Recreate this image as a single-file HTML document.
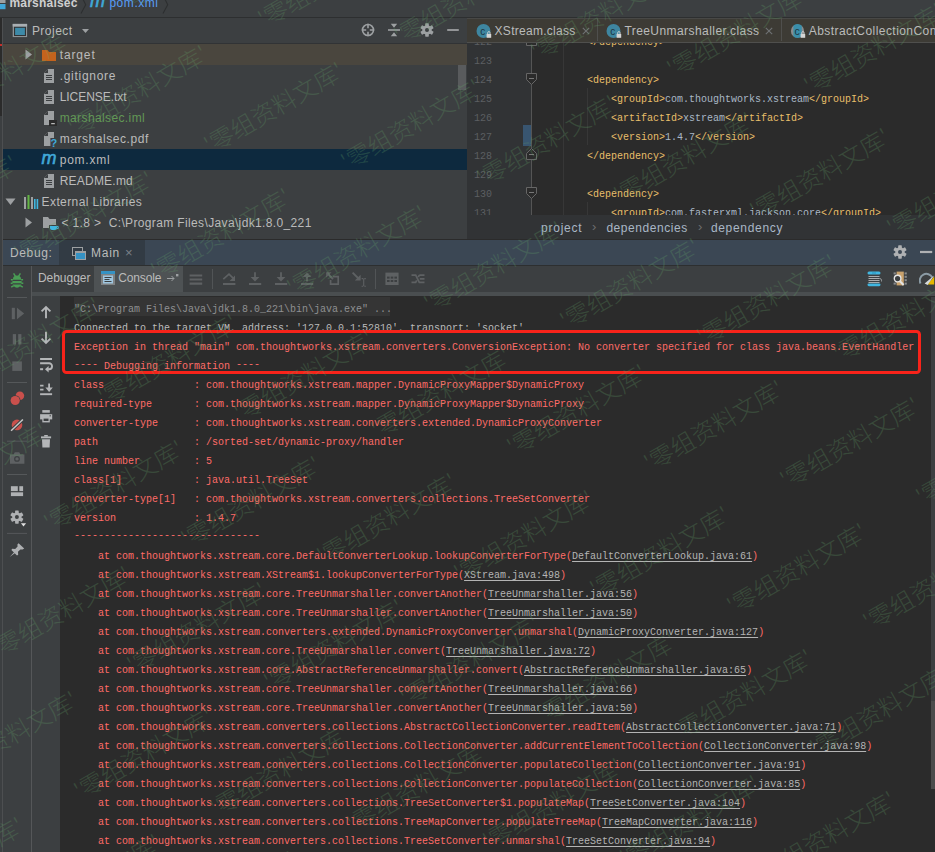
<!DOCTYPE html>
<html><head><meta charset="utf-8">
<style>
*{margin:0;padding:0;box-sizing:border-box}
html,body{width:935px;height:852px;overflow:hidden;background:#3c3f41}
body{position:relative;font-family:"Liberation Sans","Noto Sans CJK SC",sans-serif;font-size:12px;color:#bbbbbb}
.abs{position:absolute}
.ui{position:absolute;font-family:"Liberation Sans","Noto Sans CJK SC",sans-serif;font-size:12px;color:#bbb;white-space:pre;line-height:16px}
.mono{font-family:"Liberation Mono","Noto Sans CJK SC",monospace;font-size:11px;white-space:pre;transform:scaleX(0.90909);transform-origin:0 0}
#nav{left:0;top:0;width:935px;height:17px;background:#3c3f41;overflow:hidden}
#navline{left:0;top:17px;width:935px;height:1px;background:#2d2f30}
#lstrip{left:0;top:18px;width:3px;height:834px;background:#3c3f41;border-right:1px solid #4d4f51}
#proj{left:3px;top:18px;width:464px;height:221px;background:#3c3f41;overflow:hidden}
#projhead{left:0;top:0;width:464px;height:26px;background:#3c3f41;border-bottom:1px solid #313335}
.row{position:absolute;left:0;width:464px;height:21px}
.row.ex{background:#4a463e}
.row.sel{background:#0d293e}
.row .t{position:absolute;top:3px;font-size:12px;line-height:16px;color:#bbb;white-space:pre}
#editor{left:467px;top:18px;width:468px;height:221px;background:#2b2b2b;overflow:hidden}
#tabs{left:0;top:0;width:468px;height:25px;background:#3d3b35;border-bottom:1px solid #4f4f4d}
#gutter{left:0;top:25px;width:64px;height:172px;background:#313335}
#crumbs{left:0;top:197px;width:468px;height:24px;background:#313335}
.ln{position:absolute;left:7px;height:19px;line-height:19px;color:#5c5f62}
.code{position:absolute;height:19px;line-height:19px}
.code .t{color:#e8bf6a}
.code .x{color:#a9b7c6}
#dbghead{left:0;top:239px;width:935px;height:26px;background:#3b4754;border-top:1px solid #2b2b2b}
#dbgbar{left:3px;top:265px;width:932px;height:31px;background:#3c3f41;border-top:1px solid #2d2f30}
#lcol{left:3px;top:266px;width:29px;height:586px;background:#3c3f41;border-right:1px solid #555759}
#acol{left:32px;top:296px;width:28px;height:556px;background:#3c3f41}
#console{left:60px;top:296px;width:875px;height:556px;background:#2b2b2b;overflow:hidden}
.cl{position:absolute;left:14px;height:19px;line-height:19px;color:#ff6b68}
.dsh{position:relative;top:-2px}
.cl.g0{color:#8f9092}
.cl.g1{color:#bbbbbb}
.cl u{color:#b4b4b4;text-decoration:underline;text-underline-offset:2px}
#hl0{left:14px;top:1px;width:316px;height:19px;background:#353535}
#redbox{left:62px;top:330px;width:859px;height:44px;border:3px solid #f8231a;border-radius:4.5px}
.wm{position:absolute;font-family:"Noto Sans CJK SC","Liberation Sans",sans-serif;font-weight:300;font-size:24px;line-height:24px;color:rgb(100,165,105);opacity:.25;transform:rotate(-30deg);transform-origin:18px 13.3px;white-space:pre}
#wmlayer{left:0;top:0;width:935px;height:852px;overflow:hidden;pointer-events:none}
</style></head><body>
<!-- top navigation bar -->
<div class="abs" id="nav">
 <svg class="abs" style="left:0;top:0" width="7" height="10" viewBox="0 0 7 10"><rect x="0" y="0" width="5.5" height="3" fill="#9da0a2"/><rect x="0" y="4" width="5.5" height="5.2" fill="#40a6d8"/></svg>
 <span class="ui" style="left:9.4px;top:-5px;letter-spacing:0.217px;font-weight:bold;color:#cfcfcf">marshalsec</span>
 <svg class="abs" style="left:78px;top:-4px" width="10" height="18" viewBox="0 0 10 18"><path d="M3.5 0L7.7 8.8L3 17.5" stroke="#2d2f30" fill="none" stroke-width="1.1"/></svg>
 <span class="abs" style="left:90px;top:-9.5px;font:italic normal 18px/20px 'Liberation Sans',sans-serif;color:#40a8d8;-webkit-text-stroke:0.6px #40a8d8">m</span>
 <span class="ui" style="left:109.4px;top:-5px;letter-spacing:0.551px;color:#589df6">pom.xml</span>
 <svg class="abs" style="left:160px;top:-4px" width="10" height="18" viewBox="0 0 10 18"><path d="M3.5 0L7.7 8.8L3 17.5" stroke="#2d2f30" fill="none" stroke-width="1.1"/></svg>
</div>
<div class="abs" id="navline"></div>

<!-- project tool window -->
<div class="abs" id="proj">
 <div class="abs" id="projhead">
  <svg class="abs" style="left:9px;top:5px" width="16" height="15" viewBox="0 0 16 15"><rect x="0.7" y="0.9" width="14.4" height="13.2" fill="#8d9396"/><rect x="0.7" y="0.9" width="14.4" height="2.6" fill="#a9afb3"/><rect x="2" y="3.8" width="12" height="9.2" fill="#303335"/><rect x="3.1" y="4.8" width="9.8" height="7.2" fill="#3d8aa8"/></svg>
  <span class="ui" style="left:28.9px;top:5px;letter-spacing:0.479px;">Project</span>
  <svg class="abs" style="left:79px;top:11px" width="8" height="5" viewBox="0 0 8 5"><path d="M0 0h7L3.5 4z" fill="#9da0a2"/></svg>
  <!-- header icons -->
  <svg class="abs" style="left:357px;top:4px" width="16" height="16" viewBox="0 0 16 16"><circle cx="8" cy="8" r="5.5" fill="none" stroke="#9da0a2" stroke-width="1.6"/><path d="M8 1.8v4.4M8 9.8v4.4M1.8 8h4.4M9.8 8h4.4" stroke="#9da0a2" stroke-width="1.6"/></svg>
  <svg class="abs" style="left:383px;top:4px" width="16" height="16" viewBox="0 0 16 16"><path d="M2 8h12" stroke="#9da0a2" stroke-width="1.6"/><path d="M4.8 1.8h6.4L8 5.8zM4.8 14.2h6.4L8 10.2z" fill="#9da0a2"/></svg>
  <svg class="abs" style="left:416px;top:4px" width="16" height="16" viewBox="0 0 16 16"><g fill="#9da0a2"><circle cx="8" cy="8" r="4.7"/><rect x="6.2" y="1.3" width="3.6" height="13.4" rx="0.6"/><rect x="6.2" y="1.3" width="3.6" height="13.4" rx="0.6" transform="rotate(60 8 8)"/><rect x="6.2" y="1.3" width="3.6" height="13.4" rx="0.6" transform="rotate(120 8 8)"/></g><circle cx="8" cy="8" r="2" fill="#3c3f41"/></svg>
  <svg class="abs" style="left:442px;top:4px" width="16" height="16" viewBox="0 0 16 16"><path d="M2.2 8h11.6" stroke="#9da0a2" stroke-width="1.8"/></svg>
 </div>
<div class="row ex" style="top:26px"><svg class="abs" style="left:22px;top:5px" width="8" height="11" viewBox="0 0 8 11"><path d="M0.5 0.5L7 5.5L0.5 10.5z" fill="#9da0a2"/></svg><svg class="abs" style="left:37.5px;top:3px" width="16" height="16" viewBox="0 0 16 16"><path d="M1 3h5.5l1.5 2H15v9H1z" fill="#c4631d"/></svg><span class="t" style="left:56.7px;letter-spacing:0.871px;color:#bbb">target</span></div>
<div class="row " style="top:47px"><svg class="abs" style="left:38px;top:3px" width="16" height="16" viewBox="0 0 16 16"><path d="M7 1h6v14H3V5z" fill="#9da0a2"/><path d="M3 5l4-4v4z" fill="#3c3f41"/><path d="M3.6 4.4L6.4 1.6" stroke="#9da0a2" stroke-width="0"/><path d="M5 7.5h6M5 9.5h6M5 11.5h6" stroke="#3c3f41" stroke-width="1"/></svg><span class="t" style="left:56.7px;letter-spacing:0.704px;color:#bbb">.gitignore</span></div>
<div class="row " style="top:68px"><svg class="abs" style="left:38px;top:3px" width="16" height="16" viewBox="0 0 16 16"><path d="M7 1h6v14H3V5z" fill="#9da0a2"/><path d="M3 5l4-4v4z" fill="#3c3f41"/><path d="M3.6 4.4L6.4 1.6" stroke="#9da0a2" stroke-width="0"/><path d="M5 7.5h6M5 9.5h6M5 11.5h6" stroke="#3c3f41" stroke-width="1"/></svg><span class="t" style="left:56.7px;letter-spacing:-0.039px;color:#bbb">LICENSE.txt</span></div>
<div class="row " style="top:89px"><svg class="abs" style="left:38px;top:3px" width="16" height="16" viewBox="0 0 16 16"><path d="M7 1h6v14H3V5z" fill="#9da0a2"/><path d="M3 5l4-4v4z" fill="#3c3f41"/><rect x="8" y="10" width="8" height="6" fill="#2b2b2b"/><rect x="10.2" y="13.2" width="3.6" height="1" fill="#ddd"/></svg><span class="t" style="left:56.7px;letter-spacing:0.383px;color:#629755">marshalsec.iml</span></div>
<div class="row " style="top:110px"><svg class="abs" style="left:38px;top:3px" width="16" height="16" viewBox="0 0 16 16"><path d="M7 1h6v6h-3.6v8H3V5z" fill="#9da0a2"/><path d="M3 5l4-4v4z" fill="#3c3f41"/><text x="9.6" y="15.6" font-family="Liberation Sans,sans-serif" font-weight="bold" font-size="11" fill="#3fa9d9">?</text></svg><span class="t" style="left:56.7px;letter-spacing:0.553px;color:#bbb">marshalsec.pdf</span></div>
<div class="row sel" style="top:131px"><span class="abs" style="left:38.5px;top:-1px;font:italic normal 18px 'Liberation Sans',sans-serif;color:#40a8d8;-webkit-text-stroke:0.6px #40a8d8">m</span><span class="t" style="left:56.7px;letter-spacing:0.765px;color:#bbb">pom.xml</span></div>
<div class="row " style="top:152px"><svg class="abs" style="left:38px;top:3px" width="16" height="16" viewBox="0 0 16 16"><path d="M7 1h6v14H3V5z" fill="#9da0a2"/><path d="M3 5l4-4v4z" fill="#3c3f41"/><path d="M3.6 4.4L6.4 1.6" stroke="#9da0a2" stroke-width="0"/><path d="M5 7.5h6M5 9.5h6M5 11.5h6" stroke="#3c3f41" stroke-width="1"/></svg><span class="t" style="left:56.7px;letter-spacing:0.217px;color:#bbb">README.md</span></div>
<div class="row " style="top:173px"><svg class="abs" style="left:2px;top:7px" width="11" height="8" viewBox="0 0 11 8"><path d="M0.5 0.5h10L5.5 7z" fill="#9da0a2"/></svg><svg class="abs" style="left:20px;top:3px" width="16" height="16" viewBox="0 0 16 16"><rect x="1" y="3" width="2" height="12" fill="#9da0a2"/><rect x="4.5" y="1" width="2" height="14" fill="#62b543"/><rect x="8" y="3" width="2" height="12" fill="#9da0a2"/><rect x="11" y="5" width="1.6" height="10" fill="#40b6e0"/><rect x="13.6" y="5" width="1.6" height="10" fill="#40b6e0"/></svg><span class="t" style="left:38.6px;letter-spacing:0.396px;color:#bbb">External Libraries</span></div>
<div class="row " style="top:194px"><svg class="abs" style="left:22px;top:5px" width="8" height="11" viewBox="0 0 8 11"><path d="M0.5 0.5L7 5.5L0.5 10.5z" fill="#9da0a2"/></svg><svg class="abs" style="left:39px;top:3px" width="18" height="16" viewBox="0 0 18 16"><path d="M1 2h5l1.5 2H14v6H7v3H1z" fill="#9da0a2"/><path d="M8 11h7v2.2a2 2 0 0 1-2 1.8h-3a2 2 0 0 1-2-1.8z" fill="#40b6e0"/><path d="M15 11.5h1.2v2H15" stroke="#40b6e0" fill="none"/></svg><span class="t" style="left:58.4px;letter-spacing:0.360px;color:#bbb">&lt; 1.8 &gt;  C:\Program Files\Java\jdk1.8.0_221</span></div>
 <div class="abs" style="left:455px;top:47px;width:8px;height:25px;background:#595b5d"></div>
</div>

<!-- editor -->
<div class="abs" id="editor">
 <div class="abs" id="gutter"></div>
 <div class="abs" style="left:64px;top:25px;width:1px;height:172px;background:#555"></div>
 <div class="abs" style="left:96px;top:25px;width:1px;height:172px;background:#373737"></div>
 <div class="abs" style="left:120px;top:70px;width:1px;height:57px;background:#373737"></div>
 <div class="abs" style="left:120px;top:184px;width:1px;height:14px;background:#373737"></div>
 <div class="abs" style="left:56px;top:107px;width:8px;height:21px;background:#385570"></div>
<div class="ln mono" style="top:14.5px">122</div>
<div class="code mono" style="top:14.5px;left:120px"><span class="t">&lt;/dependency&gt;</span></div>
<div class="ln mono" style="top:33.5px">123</div>
<div class="ln mono" style="top:52.5px">124</div>
<div class="code mono" style="top:52.5px;left:120px"><span class="t">&lt;dependency&gt;</span></div>
<div class="ln mono" style="top:71.5px">125</div>
<div class="code mono" style="top:71.5px;left:144px"><span class="t">&lt;groupId&gt;</span><span class="x">com.thoughtworks.xstream</span><span class="t">&lt;/groupId&gt;</span></div>
<div class="ln mono" style="top:90.5px">126</div>
<div class="code mono" style="top:90.5px;left:144px"><span class="t">&lt;artifactId&gt;</span><span class="x">xstream</span><span class="t">&lt;/artifactId&gt;</span></div>
<div class="ln mono" style="top:109.5px">127</div>
<div class="code mono" style="top:109.5px;left:144px"><span class="t">&lt;version&gt;</span><span class="x">1.4.7</span><span class="t">&lt;/version&gt;</span></div>
<div class="ln mono" style="top:128.5px">128</div>
<div class="code mono" style="top:128.5px;left:120px"><span class="t">&lt;/dependency&gt;</span></div>
<div class="ln mono" style="top:147.5px">129</div>
<div class="ln mono" style="top:166.5px">130</div>
<div class="code mono" style="top:166.5px;left:120px"><span class="t">&lt;dependency&gt;</span></div>
<div class="ln mono" style="top:185.5px">131</div>
<div class="code mono" style="top:185.5px;left:144px"><span class="t">&lt;groupId&gt;</span><span class="x">com.fasterxml.jackson.core</span><span class="t">&lt;/groupId&gt;</span></div>
 <!-- fold markers -->
 <svg class="abs" style="left:59px;top:16px" width="11" height="12" viewBox="0 0 11 12"><path d="M0.5 11.5h10v-6l-5-5l-5 5z" fill="#2b2b2b" stroke="#666"/><path d="M3 6.5h5" stroke="#777"/></svg>
 <svg class="abs" style="left:59px;top:55px" width="11" height="12" viewBox="0 0 11 12"><path d="M0.5 0.5h10v6l-5 5l-5-5z" fill="#2b2b2b" stroke="#666"/><path d="M3 5.5h5" stroke="#777"/></svg>
 <svg class="abs" style="left:59px;top:130px" width="11" height="12" viewBox="0 0 11 12"><path d="M0.5 11.5h10v-6l-5-5l-5 5z" fill="#2b2b2b" stroke="#666"/><path d="M3 6.5h5" stroke="#777"/></svg>
 <svg class="abs" style="left:59px;top:169px" width="11" height="12" viewBox="0 0 11 12"><path d="M0.5 0.5h10v6l-5 5l-5-5z" fill="#2b2b2b" stroke="#666"/><path d="M3 5.5h5" stroke="#777"/></svg>
 <div class="abs" id="tabs">
  <div class="abs" style="left:0;top:0;width:468px;height:1px;background:#484846"></div>
  <div class="abs" style="left:130px;top:0;width:1px;height:23px;background:#4f4f4d"></div>
  <div class="abs" style="left:314px;top:0;width:1px;height:23px;background:#4f4f4d"></div>
  <svg class="abs" style="left:9px;top:5px" width="17" height="16" viewBox="0 0 17 16"><circle cx="7.5" cy="8" r="7" fill="#3e86a0"/><text x="4.2" y="11.6" font-family="Liberation Sans,sans-serif" font-size="10" fill="#1d3540">c</text><rect x="10.6" y="11" width="4.6" height="3.8" fill="#d4d4d4"/><path d="M11.7 11v-1.2a1.2 1.2 0 0 1 2.4 0V11" stroke="#d4d4d4" fill="none" stroke-width="0.9"/></svg>
  <span class="ui" style="left:27.6px;top:5px;letter-spacing:0.266px;">XStream.class</span>
  <svg class="abs" style="left:115px;top:9px" width="8" height="8" viewBox="0 0 8 8"><path d="M0.8 0.8L7.2 7.2M7.2 0.8L0.8 7.2" stroke="#6f7274" stroke-width="1.1"/></svg>
  <svg class="abs" style="left:139px;top:5px" width="17" height="16" viewBox="0 0 17 16"><circle cx="7.5" cy="8" r="7" fill="#3e86a0"/><text x="4.2" y="11.6" font-family="Liberation Sans,sans-serif" font-size="10" fill="#1d3540">c</text><rect x="10.6" y="11" width="4.6" height="3.8" fill="#d4d4d4"/><path d="M11.7 11v-1.2a1.2 1.2 0 0 1 2.4 0V11" stroke="#d4d4d4" fill="none" stroke-width="0.9"/></svg>
  <span class="ui" style="left:157.4px;top:5px;letter-spacing:0.435px;">TreeUnmarshaller.class</span>
  <svg class="abs" style="left:298px;top:9px" width="8" height="8" viewBox="0 0 8 8"><path d="M0.8 0.8L7.2 7.2M7.2 0.8L0.8 7.2" stroke="#6f7274" stroke-width="1.1"/></svg>
  <svg class="abs" style="left:323px;top:5px" width="17" height="16" viewBox="0 0 17 16"><defs><clipPath id="cpa"><rect x="3.4" y="0" width="8.4" height="16"/></clipPath></defs><circle cx="7.5" cy="8" r="6.6" fill="#8a8c8e"/><circle cx="7.5" cy="8" r="7" fill="#3a8eaa" clip-path="url(#cpa)"/><text x="4.4" y="11.6" font-family="Liberation Sans,sans-serif" font-size="10.5" fill="#1d3540">c</text><rect x="10.6" y="11" width="4.6" height="3.8" fill="#d4d4d4"/><path d="M11.7 11v-1.2a1.2 1.2 0 0 1 2.4 0V11" stroke="#d4d4d4" fill="none" stroke-width="0.9"/></svg>
  <span class="ui" style="left:341.7px;top:5px;letter-spacing:0.450px;">AbstractCollectionConverter.class</span>
 </div>
 <div class="abs" id="crumbs">
  <span class="ui" style="left:74.0px;top:5px;letter-spacing:0.769px;color:#a9b7c6">project</span>
  <span class="ui" style="left:125px;top:4px;font-size:13px;color:#6e6e6e">›</span>
  <span class="ui" style="left:139.4px;top:5px;letter-spacing:0.548px;color:#a9b7c6">dependencies</span>
  <span class="ui" style="left:231px;top:4px;font-size:13px;color:#6e6e6e">›</span>
  <span class="ui" style="left:243.9px;top:5px;letter-spacing:0.683px;color:#a9b7c6">dependency</span>
 </div>
</div>

<!-- debug tool window header -->
<div class="abs" id="dbghead">
 <span class="ui" style="left:9.9px;top:5px;letter-spacing:0.669px;">Debug:</span>
 <div class="abs" style="left:59px;top:0;width:86px;height:25px;background:#323b44"></div>
 <svg class="abs" style="left:71px;top:5px" width="16" height="16" viewBox="0 0 16 16"><rect x="1.5" y="2.5" width="10" height="8" fill="none" stroke="#9da0a2"/><rect x="4" y="6" width="11" height="9" fill="#9da0a2"/><rect x="5" y="8" width="9" height="6" fill="#3592c4"/></svg>
 <span class="ui" style="left:91.1px;top:5px;letter-spacing:0.696px;">Main</span>
 <span class="ui" style="left:125px;top:5px;font-size:13px;color:#7a8088">×</span>
 <svg class="abs" style="left:892px;top:4px" width="16" height="16" viewBox="0 0 16 16"><g fill="#afb1b3"><circle cx="8" cy="8" r="4.7"/><rect x="6.2" y="1.3" width="3.6" height="13.4" rx="0.6"/><rect x="6.2" y="1.3" width="3.6" height="13.4" rx="0.6" transform="rotate(60 8 8)"/><rect x="6.2" y="1.3" width="3.6" height="13.4" rx="0.6" transform="rotate(120 8 8)"/></g><circle cx="8" cy="8" r="2" fill="#3b4754"/></svg>
 <svg class="abs" style="left:918px;top:4px" width="17" height="16" viewBox="0 0 17 16"><path d="M2 8h12.2" stroke="#afb1b3" stroke-width="2.2"/></svg>
</div>

<!-- debug toolbar -->
<div class="abs" id="dbgbar">
 <div class="abs" style="left:91px;top:0;width:89px;height:26px;background:#4e5254"></div>
 <div class="abs" style="left:29px;top:26px;width:903px;height:4px;background:#4a4e50"></div>
 <span class="ui" style="left:34.9px;top:4px;letter-spacing:-0.013px;">Debugger</span>
 <svg class="abs" style="left:97px;top:4px" width="16" height="16" viewBox="0 0 16 16"><rect x="1" y="1" width="14" height="14" fill="#7f8284"/><rect x="1" y="1" width="14" height="3" fill="#3592c4"/><rect x="3" y="5.5" width="10" height="8" fill="#9fc6e0"/><path d="M4.5 7.5h7M4.5 9.5h5M4.5 11.5h7" stroke="#3c3f41"/></svg>
 <span class="ui" style="left:115.2px;top:4px;letter-spacing:-0.119px;">Console</span>
 <svg class="abs" style="left:164px;top:7px" width="12" height="10" viewBox="0 0 12 10"><path d="M0 5.5h7M4.5 3L7 5.5L4.5 8" stroke="#9da0a2" fill="none"/><rect x="9" y="1" width="2.4" height="2.4" fill="#9da0a2"/></svg>
 <!-- disabled toolbar icons -->
 <svg class="abs" style="left:185px;top:7px" width="16" height="14" viewBox="0 0 16 14"><path d="M1.6 2.5h12.6M1.6 6.5h12.6M1.6 10.6h12.6" stroke="#5e6163" stroke-width="2.2"/></svg>
 <div class="abs" style="left:209px;top:3px;width:1px;height:20px;background:#515456"></div>
 <svg class="abs" style="left:218px;top:5px" width="16" height="16" viewBox="0 0 16 16"><path d="M2 13h12.4" stroke="#5e6163" stroke-width="2"/><path d="M2.3 8.2L8 3.2L12.6 7.6" stroke="#5e6163" stroke-width="1.7" fill="none"/><path d="M14 4.6V10H8.6z" fill="#5e6163"/></svg>
 <svg class="abs" style="left:244px;top:5px" width="16" height="16" viewBox="0 0 16 16"><path d="M2 13h12.2" stroke="#5e6163" stroke-width="2"/><path d="M8 1.2v6" stroke="#5e6163" stroke-width="1.8"/><path d="M3.6 6h8.8L8 10.6z" fill="#5e6163"/></svg>
 <svg class="abs" style="left:270px;top:5px" width="16" height="16" viewBox="0 0 16 16"><path d="M2 13h12.2" stroke="#5e6163" stroke-width="2"/><path d="M8 1.2v6" stroke="#5e6163" stroke-width="1.8"/><path d="M3.6 6h8.8L8 10.6z" fill="#5e6163"/></svg>
 <svg class="abs" style="left:296px;top:5px" width="16" height="16" viewBox="0 0 16 16"><path d="M2 13h12.2" stroke="#5e6163" stroke-width="2"/><path d="M8 5v5.6" stroke="#5e6163" stroke-width="1.8"/><path d="M3.6 6h8.8L8 1.4z" fill="#5e6163"/></svg>
 <svg class="abs" style="left:322px;top:5px" width="16" height="16" viewBox="0 0 16 16"><path d="M8 5.6h5.2v7.6H5.6V9" fill="none" stroke="#5e6163" stroke-width="1.7"/><path d="M2 2l6 6" stroke="#5e6163" stroke-width="1.9"/><path d="M1.2 1.2h5.4L1.2 6.6z" fill="#5e6163"/></svg>
 <svg class="abs" style="left:348px;top:5px" width="16" height="16" viewBox="0 0 16 16"><path d="M1.6 1.6l6.4 6.4" stroke="#5e6163" stroke-width="1.9"/><path d="M9.6 3.8v5.8H3.8z" fill="#5e6163"/><path d="M10.6 7.6h1.4M13.4 7.6h1.4M10.6 15.2h1.4M13.4 15.2h1.4M12.7 7.6v7.6" stroke="#5e6163" stroke-width="1.1" fill="none"/></svg>
 <div class="abs" style="left:372px;top:3px;width:1px;height:20px;background:#515456"></div>
 <svg class="abs" style="left:381px;top:5px" width="16" height="16" viewBox="0 0 16 16"><rect x="1.4" y="1.6" width="13.2" height="12.4" fill="#5e6163"/><g fill="#3c3f41"><rect x="3" y="5.6" width="2.6" height="2"/><rect x="6.7" y="5.6" width="2.6" height="2"/><rect x="10.4" y="5.6" width="2.6" height="2"/><rect x="3" y="9" width="2.6" height="2"/><rect x="6.7" y="9" width="2.6" height="2"/><rect x="10.4" y="9" width="2.6" height="2"/></g></svg>
 <svg class="abs" style="left:407px;top:5px" width="16" height="16" viewBox="0 0 16 16"><path d="M1.5 4.2h4.2l3.6 7.2h5.2M1.5 11.4h4.2l1-2M9.3 4.2h5.2M8.3 6.2l1-2M9.8 7.8h4.7" stroke="#5e6163" stroke-width="1.7" fill="none"/></svg>
 <!-- right icons -->
 <svg class="abs" style="left:864px;top:5px" width="16" height="16" viewBox="0 0 16 16"><rect x="0.5" y="0.6" width="13" height="3" rx="1.5" fill="#40b6e0"/><path d="M5 2h4" stroke="#2a8bb0" stroke-width="0.8"/><rect x="0.5" y="12.4" width="13" height="2.8" rx="1.4" fill="#40b6e0"/><path d="M1.5 5.5h11M1.5 7.5h11M1.5 9.5h11M1.5 11.5h11" stroke="#c4c7c9" stroke-width="0.8"/><path d="M12.5 7.5q2 0 2 1.6v1.4" stroke="#9da0a2" fill="none" stroke-width="0.9"/></svg>
 <svg class="abs" style="left:889.5px;top:5px" width="16" height="16" viewBox="0 0 16 16"><rect x="3.6" y="0.6" width="7.2" height="13.8" fill="#c9a26d"/><g fill="#8a8d8f"><rect x="0.6" y="1.4" width="2.2" height="2"/><rect x="11.6" y="1.4" width="2.2" height="2"/><rect x="11.6" y="4.8" width="2.2" height="2"/><rect x="11.6" y="8.2" width="2.2" height="2"/><rect x="11.6" y="11.6" width="2.2" height="2"/><rect x="0.6" y="11.6" width="2.2" height="2"/></g><circle cx="4.6" cy="7.6" r="3.3" fill="#3c3f41" stroke="#e4e4e4" stroke-width="1.4"/><path d="M7 10.2l3.6 3.8" stroke="#e4e4e4" stroke-width="2"/></svg>
 <svg class="abs" style="left:915.5px;top:5px" width="17" height="16" viewBox="0 0 17 16"><path d="M1.5 12.5a6.4 6.4 0 0 1 11.8-6" fill="none" stroke="#8b9ba5" stroke-width="2"/><path d="M15.2 5.6v7.8H8.4z" fill="#e5b700"/><path d="M5.6 12.4L15.2 4.4L8.6 14z" fill="#d5dade"/></svg>
</div>

<!-- left debug columns -->
<div class="abs" id="lcol">
 <svg class="abs" style="left:0;top:0" width="28" height="320" viewBox="3 266 28 320">
  <g fill="#499c54"><ellipse cx="17" cy="282" rx="4.7" ry="5.7"/><path d="M13 279.2a4 3.6 0 0 1 8 0z"/></g>
  <path d="M13.6 273.4L15.8 276.8M20.4 273.4L18.2 276.8M10.9 279.8h3M20.1 279.8h3M10.7 283.2h3M20.3 283.2h3M11.2 287.2l2.6-1.6M22.8 287.2l-2.6-1.6" stroke="#499c54" stroke-width="1.5"/>
  <path d="M12.6 280.3h8.8M12.6 283.9h8.8" stroke="#3c3f41" stroke-width="1.3"/>
  <path d="M7 297.5h20M7 382.5h20M7 441.2h20M7 474.5h20M7 533.4h20" stroke="#55585a" stroke-width="1"/>
  <rect x="11.8" y="307.8" width="3.1" height="11.4" fill="#5e6163"/><path d="M17 307.8l7.2 5.7l-7.2 5.7z" fill="#5e6163"/>
  <rect x="12.8" y="334.1" width="3.2" height="10.4" fill="#5e6163"/><rect x="18.2" y="334.1" width="3.2" height="10.4" fill="#5e6163"/>
  <rect x="12.3" y="361.4" width="9.6" height="9.5" fill="#5e6163"/>
  <circle cx="19.9" cy="395.8" r="4.3" fill="#c9504c"/><circle cx="15.2" cy="400.5" r="5.3" fill="#3c3f41"/><circle cx="15.2" cy="400.5" r="4.6" fill="#c9504c"/>
  <circle cx="17" cy="424.9" r="5.3" fill="#c9504c"/><path d="M10.6 431.2L23.4 419" stroke="#3c3f41" stroke-width="3.4"/><path d="M11.1 430.7L22.9 419.5" stroke="#c8c8c8" stroke-width="1.5"/>
  <path d="M10 454.6h3.6l1.2-2.4h4.4l1.2 2.4h4v9.2H10z" fill="#5e6163"/><circle cx="17" cy="458.9" r="2.9" fill="#3c3f41"/><circle cx="17" cy="458.9" r="1.7" fill="#5e6163"/>
  <rect x="10.9" y="486.2" width="6.9" height="4.9" fill="#afb1b3"/><rect x="19.3" y="486.2" width="3.8" height="4.9" fill="#afb1b3"/><rect x="10.9" y="492.3" width="12.2" height="3.8" fill="#afb1b3"/>
  <g fill="#afb1b3"><circle cx="16.9" cy="517.1" r="4.6"/><rect x="15.099999999999998" y="510.5" width="3.6" height="13.2" rx="0.6" transform="rotate(0 16.9 517.1)"/><rect x="15.099999999999998" y="510.5" width="3.6" height="13.2" rx="0.6" transform="rotate(60 16.9 517.1)"/><rect x="15.099999999999998" y="510.5" width="3.6" height="13.2" rx="0.6" transform="rotate(120 16.9 517.1)"/></g><circle cx="16.9" cy="517.1" r="2" fill="#3c3f41"/>
  <path d="M20.9 523.2h5.2l-2.6 3.2z" fill="#e0e0e0"/>
  <path d="M18.6 543.2l5.6 5.4-1.6 1-2.2-.2-2.4 2.4.2 3-1.2.8-5.6-5.6.8-1.2 3 .2 2.4-2.4-.2-2.2z" fill="#afb1b3"/><path d="M9.6 557l5.2-5.6 1 1z" fill="#afb1b3"/>
 </svg>
</div>
<div class="abs" id="acol">
 <svg class="abs" style="left:0;top:0" width="28" height="200" viewBox="32 296 28 200">
  <path d="M46 318.2V307.2M41.6 311.4L46 307L50.4 311.4" stroke="#b4b6b8" stroke-width="1.9" fill="none"/>
  <path d="M46 331.8V342.8M41.6 338.6L46 343L50.4 338.6" stroke="#b4b6b8" stroke-width="1.9" fill="none"/>
  <path d="M40.1 359h11.9" stroke="#b4b6b8" stroke-width="2"/>
  <path d="M40.1 363.3h9a2.9 2.9 0 0 1 0 5.9h-1" stroke="#b4b6b8" stroke-width="1.9" fill="none"/>
  <path d="M48.6 366v6.6l-3.6-3.3z" fill="#b4b6b8"/>
  <path d="M40.1 369.2h3" stroke="#b4b6b8" stroke-width="2"/>
  <path d="M40.1 385.7h3.4M40.1 389.7h3.4" stroke="#b4b6b8" stroke-width="1.7"/>
  <path d="M40.1 394.2h12" stroke="#b4b6b8" stroke-width="1.9"/>
  <path d="M49.1 383.4v5" stroke="#b4b6b8" stroke-width="1.8"/>
  <path d="M45.4 387.6h7.4l-3.7 4.4z" fill="#b4b6b8"/>
  <rect x="42.3" y="410.1" width="7.5" height="2.6" fill="#b4b6b8"/>
  <rect x="40.1" y="414.2" width="12.1" height="5.2" fill="#b4b6b8"/>
  <rect x="42.3" y="417.4" width="7.5" height="5" fill="#b4b6b8"/>
  <rect x="43.6" y="418.6" width="4.9" height="2.4" fill="#3c3f41"/>
  <rect x="49.6" y="415.2" width="1.2" height="1.2" fill="#3c3f41"/>
  <rect x="41" y="436.4" width="10.1" height="1.9" fill="#b4b6b8"/>
  <rect x="44.2" y="435" width="3.6" height="1.6" fill="#b4b6b8"/>
  <path d="M42 439.3h8l-.4 8.3h-7.2z" fill="#b4b6b8"/>
 </svg>
</div>

<!-- console -->
<div class="abs" id="console">
 <div class="abs" id="hl0"></div>
<div class="cl mono g0" style="top:4px">"C:\Program Files\Java\jdk1.8.0_221\bin\java.exe" ...</div>
<div class="cl mono g1" style="top:23px">Connected to the target VM, address: '127.0.0.1:52810', transport: 'socket'</div>
<div class="cl mono r" style="top:42px">Exception in thread "main" com.thoughtworks.xstream.converters.ConversionException: No converter specified for class java.beans.EventHandler</div>
<div class="cl mono r" style="top:61px"><span class="dsh">----</span> Debugging information <span class="dsh">----</span></div>
<div class="cl mono r" style="top:80px">class               : com.thoughtworks.xstream.mapper.DynamicProxyMapper$DynamicProxy</div>
<div class="cl mono r" style="top:99px">required-type       : com.thoughtworks.xstream.mapper.DynamicProxyMapper$DynamicProxy</div>
<div class="cl mono r" style="top:118px">converter-type      : com.thoughtworks.xstream.converters.extended.DynamicProxyConverter</div>
<div class="cl mono r" style="top:137px">path                : /sorted-set/dynamic-proxy/handler</div>
<div class="cl mono r" style="top:156px">line number         : 5</div>
<div class="cl mono r" style="top:175px">class[1]            : java.util.TreeSet</div>
<div class="cl mono r" style="top:194px">converter-type[1]   : com.thoughtworks.xstream.converters.collections.TreeSetConverter</div>
<div class="cl mono r" style="top:213px">version             : 1.4.7</div>
<div class="cl mono r" style="top:232px"><span class="dsh">-------------------------------</span></div>
<div class="cl mono r" style="top:251px">    at com.thoughtworks.xstream.core.DefaultConverterLookup.lookupConverterForType(<u>DefaultConverterLookup.java:61</u>)</div>
<div class="cl mono r" style="top:270px">    at com.thoughtworks.xstream.XStream$1.lookupConverterForType(<u>XStream.java:498</u>)</div>
<div class="cl mono r" style="top:289px">    at com.thoughtworks.xstream.core.TreeUnmarshaller.convertAnother(<u>TreeUnmarshaller.java:56</u>)</div>
<div class="cl mono r" style="top:308px">    at com.thoughtworks.xstream.core.TreeUnmarshaller.convertAnother(<u>TreeUnmarshaller.java:50</u>)</div>
<div class="cl mono r" style="top:327px">    at com.thoughtworks.xstream.converters.extended.DynamicProxyConverter.unmarshal(<u>DynamicProxyConverter.java:127</u>)</div>
<div class="cl mono r" style="top:346px">    at com.thoughtworks.xstream.core.TreeUnmarshaller.convert(<u>TreeUnmarshaller.java:72</u>)</div>
<div class="cl mono r" style="top:365px">    at com.thoughtworks.xstream.core.AbstractReferenceUnmarshaller.convert(<u>AbstractReferenceUnmarshaller.java:65</u>)</div>
<div class="cl mono r" style="top:384px">    at com.thoughtworks.xstream.core.TreeUnmarshaller.convertAnother(<u>TreeUnmarshaller.java:66</u>)</div>
<div class="cl mono r" style="top:403px">    at com.thoughtworks.xstream.core.TreeUnmarshaller.convertAnother(<u>TreeUnmarshaller.java:50</u>)</div>
<div class="cl mono r" style="top:422px">    at com.thoughtworks.xstream.converters.collections.AbstractCollectionConverter.readItem(<u>AbstractCollectionConverter.java:71</u>)</div>
<div class="cl mono r" style="top:441px">    at com.thoughtworks.xstream.converters.collections.CollectionConverter.addCurrentElementToCollection(<u>CollectionConverter.java:98</u>)</div>
<div class="cl mono r" style="top:460px">    at com.thoughtworks.xstream.converters.collections.CollectionConverter.populateCollection(<u>CollectionConverter.java:91</u>)</div>
<div class="cl mono r" style="top:479px">    at com.thoughtworks.xstream.converters.collections.CollectionConverter.populateCollection(<u>CollectionConverter.java:85</u>)</div>
<div class="cl mono r" style="top:498px">    at com.thoughtworks.xstream.converters.collections.TreeSetConverter$1.populateMap(<u>TreeSetConverter.java:104</u>)</div>
<div class="cl mono r" style="top:517px">    at com.thoughtworks.xstream.converters.collections.TreeMapConverter.populateTreeMap(<u>TreeMapConverter.java:116</u>)</div>
<div class="cl mono r" style="top:536px">    at com.thoughtworks.xstream.converters.collections.TreeSetConverter.unmarshal(<u>TreeSetConverter.java:94</u>)</div>
 <div class="abs" style="left:871px;top:1px;width:4px;height:404px;background:#3d3f41"></div><div class="abs" style="left:871px;top:404.5px;width:4px;height:88px;background:#4b4b4b"></div>
</div>
<div class="abs" id="redbox"></div>
<div class="abs" id="lstrip"><div class="abs" style="left:0;top:0;width:2px;height:98px;background:#2b2b2b"></div><div class="abs" style="left:0;top:26px;width:2px;height:2px;background:#c4302b"></div></div>
<div class="abs" id="wmlayer"><span class="wm" style="left:-15.3px;top:-34.2px">&#39;零组资料文库&#39;</span><span class="wm" style="left:-68.7px;top:91.7px">&#39;零组资料文库&#39;</span><span class="wm" style="left:-122.0px;top:217.6px">&#39;零组资料文库&#39;</span><span class="wm" style="left:121.2px;top:-17.6px">&#39;零组资料文库&#39;</span><span class="wm" style="left:67.8px;top:108.3px">&#39;零组资料文库&#39;</span><span class="wm" style="left:14.4px;top:234.2px">&#39;零组资料文库&#39;</span><span class="wm" style="left:-38.9px;top:360.1px">&#39;零组资料文库&#39;</span><span class="wm" style="left:-92.3px;top:486.0px">&#39;零组资料文库&#39;</span><span class="wm" style="left:-145.6px;top:611.9px">&#39;零组资料文库&#39;</span><span class="wm" style="left:257.6px;top:-1.0px">&#39;零组资料文库&#39;</span><span class="wm" style="left:204.3px;top:124.9px">&#39;零组资料文库&#39;</span><span class="wm" style="left:150.9px;top:250.8px">&#39;零组资料文库&#39;</span><span class="wm" style="left:97.6px;top:376.7px">&#39;零组资料文库&#39;</span><span class="wm" style="left:44.2px;top:502.6px">&#39;零组资料文库&#39;</span><span class="wm" style="left:-9.2px;top:628.5px">&#39;零组资料文库&#39;</span><span class="wm" style="left:-62.5px;top:754.4px">&#39;零组资料文库&#39;</span><span class="wm" style="left:-115.9px;top:880.3px">&#39;零组资料文库&#39;</span><span class="wm" style="left:394.1px;top:15.7px">&#39;零组资料文库&#39;</span><span class="wm" style="left:340.8px;top:141.6px">&#39;零组资料文库&#39;</span><span class="wm" style="left:287.4px;top:267.5px">&#39;零组资料文库&#39;</span><span class="wm" style="left:234.0px;top:393.4px">&#39;零组资料文库&#39;</span><span class="wm" style="left:180.7px;top:519.3px">&#39;零组资料文库&#39;</span><span class="wm" style="left:127.3px;top:645.2px">&#39;零组资料文库&#39;</span><span class="wm" style="left:74.0px;top:771.1px">&#39;零组资料文库&#39;</span><span class="wm" style="left:20.6px;top:897.0px">&#39;零组资料文库&#39;</span><span class="wm" style="left:530.6px;top:32.3px">&#39;零组资料文库&#39;</span><span class="wm" style="left:477.2px;top:158.2px">&#39;零组资料文库&#39;</span><span class="wm" style="left:423.9px;top:284.1px">&#39;零组资料文库&#39;</span><span class="wm" style="left:370.5px;top:410.0px">&#39;零组资料文库&#39;</span><span class="wm" style="left:317.2px;top:535.9px">&#39;零组资料文库&#39;</span><span class="wm" style="left:263.8px;top:661.8px">&#39;零组资料文库&#39;</span><span class="wm" style="left:210.4px;top:787.7px">&#39;零组资料文库&#39;</span><span class="wm" style="left:157.1px;top:913.6px">&#39;零组资料文库&#39;</span><span class="wm" style="left:667.1px;top:48.9px">&#39;零组资料文库&#39;</span><span class="wm" style="left:613.7px;top:174.8px">&#39;零组资料文库&#39;</span><span class="wm" style="left:560.4px;top:300.7px">&#39;零组资料文库&#39;</span><span class="wm" style="left:507.0px;top:426.6px">&#39;零组资料文库&#39;</span><span class="wm" style="left:453.6px;top:552.5px">&#39;零组资料文库&#39;</span><span class="wm" style="left:400.3px;top:678.4px">&#39;零组资料文库&#39;</span><span class="wm" style="left:346.9px;top:804.3px">&#39;零组资料文库&#39;</span><span class="wm" style="left:293.6px;top:930.2px">&#39;零组资料文库&#39;</span><span class="wm" style="left:803.6px;top:65.5px">&#39;零组资料文库&#39;</span><span class="wm" style="left:750.2px;top:191.4px">&#39;零组资料文库&#39;</span><span class="wm" style="left:696.8px;top:317.3px">&#39;零组资料文库&#39;</span><span class="wm" style="left:643.5px;top:443.2px">&#39;零组资料文库&#39;</span><span class="wm" style="left:590.1px;top:569.2px">&#39;零组资料文库&#39;</span><span class="wm" style="left:536.8px;top:695.1px">&#39;零组资料文库&#39;</span><span class="wm" style="left:483.4px;top:821.0px">&#39;零组资料文库&#39;</span><span class="wm" style="left:940.0px;top:82.2px">&#39;零组资料文库&#39;</span><span class="wm" style="left:886.7px;top:208.1px">&#39;零组资料文库&#39;</span><span class="wm" style="left:833.3px;top:334.0px">&#39;零组资料文库&#39;</span><span class="wm" style="left:780.0px;top:459.9px">&#39;零组资料文库&#39;</span><span class="wm" style="left:726.6px;top:585.8px">&#39;零组资料文库&#39;</span><span class="wm" style="left:673.2px;top:711.7px">&#39;零组资料文库&#39;</span><span class="wm" style="left:619.9px;top:837.6px">&#39;零组资料文库&#39;</span><span class="wm" style="left:969.8px;top:350.6px">&#39;零组资料文库&#39;</span><span class="wm" style="left:916.4px;top:476.5px">&#39;零组资料文库&#39;</span><span class="wm" style="left:863.1px;top:602.4px">&#39;零组资料文库&#39;</span><span class="wm" style="left:809.7px;top:728.3px">&#39;零组资料文库&#39;</span><span class="wm" style="left:756.4px;top:854.2px">&#39;零组资料文库&#39;</span><span class="wm" style="left:946.2px;top:744.9px">&#39;零组资料文库&#39;</span><span class="wm" style="left:892.8px;top:870.8px">&#39;零组资料文库&#39;</span></div>
</body></html>
